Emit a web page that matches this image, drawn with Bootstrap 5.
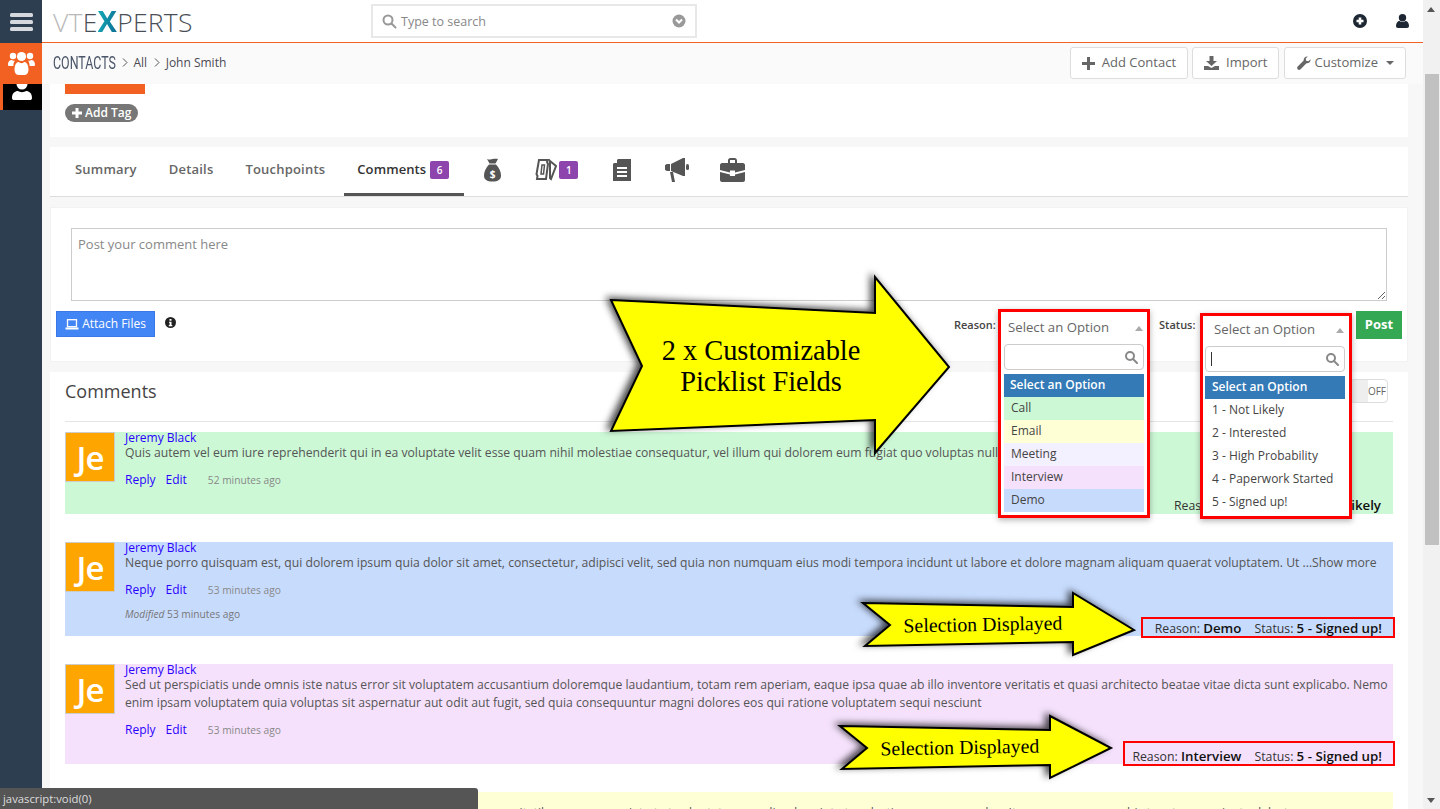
<!DOCTYPE html>
<html lang="en">
<head>
<meta charset="utf-8">
<title>Contacts</title>
<link rel="stylesheet" href="https://cdn.jsdelivr.net/npm/bootstrap@5.3.0/dist/css/bootstrap.min.css">
<style>
html,body{height:809px;overflow:hidden}
body{font-family:"Open Sans",sans-serif;font-size:12px;color:#555;background:#f7f7f7;width:1440px;position:relative}
.shell{height:809px}
.side{width:42px;background:#2c3e50;flex:none}
.side-burger{height:43px}
.side-active{height:41px;background:#f26122}
.side-user{height:26px;background:#000;border-left:3px solid #f26122}
.workspace{width:1381px;flex:none;min-width:0}
.scroller{width:17px;background:#f1f1f1;flex:none;position:relative}
.thumb{position:absolute;left:2px;width:14px;top:74px;height:471px;background:#c1c1c1}
.tri-up,.tri-down{position:absolute;left:4px;width:0;height:0;border-left:4px solid transparent;border-right:4px solid transparent}
.tri-up{top:7px;border-bottom:5px solid #555}
.tri-down{top:798px;border-top:5px solid #555}
.topbar{height:43px;background:#fff;border-bottom:1px solid #f26122;padding-left:11px}
.brand{font-family:"Open Sans",sans-serif;font-weight:300;font-size:26.500px;line-height:42px;letter-spacing:.25px;color:#4a4f57;width:318px;white-space:nowrap}
.brand-v{color:#b9b9b9}
.brand-x{font-weight:700;font-size:29px;background:linear-gradient(100deg,#14b0b8,#0c6a94);-webkit-background-clip:text;background-clip:text;color:transparent}
.searchbox{width:326px;height:34px;border:2px solid #e8e8e8;padding:0 9px;color:#888;font-size:12.500px}
.searchbox span{flex:1;margin-left:4px;padding-top:2px}
.top-icons{margin-left:auto;padding-right:14px;gap:29px}
.subbar{height:41px;background:#fafafa;padding:0 17px 0 11px}
.crumb-wrap{margin-top:-2px}
.crumb-title{font-family:"Roboto",sans-serif;font-size:18px;color:#4a5568;display:inline-block;transform:scaleX(.69);transform-origin:left center;width:62px;white-space:nowrap}
.crumb{font-size:12px;color:#4a4a55}
.crumb svg{margin:0 6px 0 6.500px}
.tool-btn{height:32px;background:#fff;border:1px solid #ddd;border-radius:3px;color:#666;font-size:13px;padding:0 11px;display:inline-flex;align-items:center;gap:7px}
.tool-btn-tight{gap:3px;padding:0 11px 0 12px;margin-left:1px}
.tool-group{gap:4px;margin-top:-1px}
.caret-mark{width:0;height:0;border-left:4px solid transparent;border-right:4px solid transparent;border-top:4px solid #666;margin-left:5px}
.stage{padding:0 15px 0 8px}
.panel{background:#fff;margin-bottom:10px}
.panel-tags{height:53px;padding-left:15px}
.tag-bar{width:80px;height:10px;background:#f26122}
.tag-pill{display:inline-flex;align-items:center;gap:3px;height:18px;margin-top:10px;padding:0 7px;background:#777;color:#fff;border-radius:9px;font-weight:600;font-size:12px}
.panel-tabs{height:50px;border-bottom:1px solid #ddd;padding-left:13px}
.tab-link{height:49px;display:flex;align-items:center;color:#666;font-size:13px;font-weight:600;padding:0 12px;margin-right:8px;letter-spacing:.2px;text-decoration:none;border-bottom:3px solid transparent}
.tab-on{color:#333;border-bottom-color:#555;margin-left:-1px;margin-right:0;padding:0 15px 0 13px;letter-spacing:.1px}
.tab-count{background:#8e44ad;color:#fff;font-size:10px;font-weight:600;padding:0;width:19px;height:18px;line-height:18px;text-align:center;border-radius:2px;margin-left:4px;display:inline-block}
.tab-ico{display:flex;align-items:center;height:45px;width:55px;justify-content:center}
.ico-bag{margin-left:1px}
.ico-ticket{width:auto;margin-left:15px;margin-right:34px}
.ico-ticket .tab-count{margin-left:2px}
.ico-doc{width:20px;margin-right:33px}
.ico-horn{width:24px;margin-right:31px}
.ico-case{width:25px}
.panel-compose{height:155px;border:1px solid #f2f2f2;padding:20px 20px 0 20px;margin-bottom:10px}
.compose-area{height:73px;border:1px solid #ccc;border-radius:0;padding:6px;font-size:13px;color:#888;resize:both}
.compose-area::placeholder{color:#888}
.compose-foot{margin:10px -15px 0 -15px}
.attach-btn{height:26px;width:99px;background:#4285f4;border:1px solid #3b78e7;color:#fff;border-radius:0;font-size:12px;padding:0;display:inline-flex;align-items:center;justify-content:center;gap:3px}
.info-ico{margin:6px 0 0 10px}
.post-btn{height:28px;width:46px;background:#34a853;color:#fff;border:0;border-radius:0;font-weight:700;font-size:13px;padding:0}
.pick-label{font-size:11px;font-weight:600;color:#444;position:absolute;top:317px}
.panel-list{padding:0 15px;height:500px;margin:0;position:relative}
.list-head{height:50px;border-bottom:1px solid #e5e5e5;font-size:18px;color:#444;padding-top:6px;margin-bottom:10px}
.toggle-off{position:absolute;right:5px;top:7px;width:38px;height:24px;border:1px solid #ddd;border-radius:4px;background:linear-gradient(90deg,#eee 0 17px,#fff 17px);font-size:10px;color:#666;line-height:22px;text-align:right;padding-right:1px}
.note{display:flex;gap:10px;position:relative;margin-bottom:28px}
.note-green{background:#ccf8d6;height:82px}
.note-blue{background:#c7dbfd;height:94px}
.note-purple{background:#f5e1fc;height:100px}
.note-yellow{background:#ffffd6;height:60px}
.avatar-box{width:50px;height:50px;background:#ffa500;color:#fff;font-size:33px;font-weight:600;line-height:50px;text-align:center;border:1px solid #ccc;flex:none;letter-spacing:-1px}
.note-body{flex:1;min-width:0;font-size:12.180px;line-height:18px;color:#555}
.note-name{color:#2a00ff;font-size:12px;line-height:12px;display:block;text-decoration:none}
.note-text{margin:0 0 9px}
.note-links{display:flex;align-items:center;font-size:12px}
.note-links a{color:#2a00ff;text-decoration:none;margin-right:10px}
.note-links small{font-size:10.200px;color:#888;margin-left:11px}
.note-mod{font-size:10.200px;color:#777;margin-top:6px}
.note-pick{position:absolute;right:12px;color:#333;font-size:12.300px;line-height:18px}
.note-pick b{font-weight:600;font-size:13.300px;color:#111}
.pick-box{position:absolute;right:-2px;border:2px solid #f00;color:#333;white-space:nowrap;text-align:right;padding-right:11px;font-size:12.300px}
.pick-box b{font-weight:600;font-size:13.300px;color:#111;margin-right:13px}
.pick-box b:last-child{margin-right:0}
.drop{position:absolute;background:#fff;border:3px solid #f00;box-shadow:0 2px 6px rgba(0,0,0,.3);padding:0 3px}
.drop-narrow{padding:0 4px 0 2px}
.drop-head{height:32px;display:flex;align-items:center;justify-content:space-between;font-size:13.200px;color:#666;padding:0 1px 0 4px}
.drop-narrow .drop-head{height:30px;padding:0 1px 2px 9px}
.drop-tri{width:0;height:0;border-left:4px solid transparent;border-right:4px solid transparent;border-bottom:5px solid #aaa}
.drop-search{height:26px;border:1px solid #ccc;border-radius:4px;margin-bottom:4px;display:flex;align-items:center;justify-content:flex-end;padding:0 5px 0 5px}
.drop-cursor{width:1px;height:14px;background:#333;margin-right:auto}
.drop-opt{height:23px;line-height:22px;padding-left:7px;font-size:12px;color:#444}
.drop-sel{background:#337ab7;color:#fff;font-weight:600;padding-left:6px}
.drop-narrow .drop-sel{padding-left:7px}
.opt-green{background:#ccf8d6}.opt-yellow{background:#ffffd6}.opt-lilac{background:#f3f0ff}.opt-pink{background:#f5e1fc}.opt-blue{background:#c7dbfd}
.callout{position:absolute;overflow:visible}
.callout text{font-family:"Liberation Serif",serif;fill:#000}
.statusbar{position:absolute;left:0;bottom:0;width:478px;height:21px;background:#555;color:#ddd;font-size:11.300px;line-height:21px;padding-left:3px;border-top-right-radius:3px}
</style>
</head>
<body>
<div class="shell d-flex">
  <aside class="side">
    <div class="side-burger d-flex align-items-center justify-content-center">
      <svg width="23" height="19" viewBox="0 0 23 19"><g fill="#d5d8dc"><rect width="23" height="4" y="1" rx="1.5"/><rect width="23" height="4" y="8" rx="1.5"/><rect width="23" height="4" y="15" rx="1.5"/></g></svg>
    </div>
    <div class="side-active d-flex align-items-center justify-content-center">
      <svg width="27" height="25" viewBox="0 0 27 25" fill="#fff"><circle cx="5" cy="5" r="3.2"/><circle cx="22" cy="5" r="3.2"/><circle cx="13.5" cy="5.5" r="4.6"/><path d="M0 14c0-4 2-5 4-5 1 1 2 1 3 .6-1 1-1.600 3-1.600 5.400H1.500C.6 15 0 14.800 0 14zM27 14c0-4-2-5-4-5-1 1-2 1-3 .6 1 1 1.600 3 1.600 5.400h3.900c.9 0 1.500-.2 1.500-1zM6.500 19c0-6 2.500-8 4-8 1.700 1.500 4.300 1.500 6 0 1.500 0 4 2 4 8 0 3-2 5-4 5h-6c-2 0-4-2-4-5z"/></svg>
    </div>
    <div class="side-user d-flex justify-content-center">
      <svg width="22" height="18" viewBox="0 0 22 18" fill="#fff"><circle cx="10" cy="0" r="5.500"/><path d="M0 14c0-5 3-7 6-7 2 1.500 6 1.500 8 0 3 0 6 2 6 7 0 1.500-1 2-2 2H2c-1 0-2-.5-2-2z"/></svg>
    </div>
  </aside>

  <div class="workspace">
    <header class="topbar d-flex align-items-center">
      <div class="brand"><span class="brand-v">VT</span>E<span class="brand-x">X</span>PERTS</div>
      <div class="searchbox d-flex align-items-center">
        <svg width="15" height="15" viewBox="0 0 15 15" fill="none" stroke="#999" stroke-width="2"><circle cx="6" cy="6" r="4.500"/><path d="M9.500 9.500l4 4" stroke-linecap="round"/></svg>
        <span>Type to search</span>
        <svg width="14" height="14" viewBox="0 0 14 14"><circle cx="7" cy="7" r="6.500" fill="#999"/><path d="M4 5.500l3 3 3-3" fill="none" stroke="#fff" stroke-width="2"/></svg>
      </div>
      <div class="top-icons d-flex align-items-center">
        <svg width="14" height="14" viewBox="0 0 14 14"><circle cx="7" cy="7" r="7" fill="#1c2733"/><path d="M7 3.500v7M3.500 7h7" stroke="#fff" stroke-width="2.600"/></svg>
        <svg width="13" height="14" viewBox="0 0 13 14" fill="#1c2733"><circle cx="6.500" cy="3.800" r="3.700"/><path d="M0 12c0-3 1.500-5 3.500-5 1.500 1.200 4.500 1.200 6 0 2 0 3.500 2 3.500 5 0 1.200-.8 2-2 2H2c-1.200 0-2-.8-2-2z"/></svg>
      </div>
    </header>

    <div class="subbar d-flex align-items-center justify-content-between">
      <div class="crumb-wrap d-flex align-items-center">
        <span class="crumb-title">CONTACTS</span>
        <span class="crumb d-flex align-items-center">
          <svg width="6" height="9" viewBox="0 0 6 9" fill="none" stroke="#555"><path d="M1 .5l4 4-4 4"/></svg>All
          <svg width="6" height="9" viewBox="0 0 6 9" fill="none" stroke="#555"><path d="M1 .5l4 4-4 4"/></svg>John Smith
        </span>
      </div>
      <div class="tool-group d-flex">
        <button class="btn tool-btn" type="button"><svg width="13" height="13" viewBox="0 0 13 13" fill="#666"><path d="M5 0h3v5h5v3H8v5H5V8H0V5h5z"/></svg>Add Contact</button>
        <button class="btn tool-btn" type="button"><svg width="15" height="14" viewBox="0 0 15 14" fill="#666"><path d="M5.500 0h4v5H13L7.500 10 2 5h3.500zM0 10h4l3.500 2L11 10h4v4H0z"/></svg>Import</button>
        <button class="btn tool-btn tool-btn-tight" type="button"><svg width="14" height="14" viewBox="0 0 14 14" fill="#666"><path d="M13.500 3.200c.4 2-1.300 4.500-4 4.100L3.600 13.300c-.8.800-2.100.8-2.900 0s-.8-2.100 0-2.900L6.700 4.500C6.300 1.800 8.800 0 10.800.5L8.700 2.600l.5 2.200 2.200.5z"/></svg>Customize<span class="caret-mark"></span></button>
      </div>
    </div>

    <main class="stage">
      <section class="panel panel-tags">
        <div class="tag-bar"></div>
        <span class="tag-pill"><svg width="10" height="10" viewBox="0 0 10 10" fill="#fff"><path d="M3.500 0h3v3.500H10v3H6.500V10h-3V6.500H0v-3h3.500z"/></svg>Add Tag</span>
      </section>

      <section class="panel panel-tabs">
        <ul class="nav">
          <li class="nav-item"><a class="tab-link" href="#">Summary</a></li>
          <li class="nav-item"><a class="tab-link" href="#">Details</a></li>
          <li class="nav-item"><a class="tab-link" href="#">Touchpoints</a></li>
          <li class="nav-item"><a class="tab-link tab-on" href="#">Comments<span class="tab-count">6</span></a></li>
          <li class="nav-item tab-ico ico-bag">
            <svg width="17" height="24" viewBox="0 0 17 24" fill="#555"><path d="M3 1c2 1 3 .5 5.500 0S13 .5 14 1l-2.500 4.500h-6zM5 6.500h7c3 3 5 7 5 11 0 4-3 6-8.500 6S0 21.500 0 17.500c0-4 2-8 5-11z"/><text x="8.500" y="20" text-anchor="middle" font-size="10" font-weight="700" fill="#fff" font-family="Open Sans">$</text></svg>
          </li>
          <li class="nav-item tab-ico ico-ticket">
            <svg width="22" height="24" viewBox="0 0 22 24" fill="none" stroke="#555" stroke-width="2"><path d="M4 2h9l-1 2 1 2-2 15H2l.5-3-1-2L4 2z"/><path d="M7 7h2.500l-1 9H6z" stroke-width="1.500"/><path d="M15 3l6 5-5 13-1-1z"/></svg>
            <span class="tab-count">1</span>
          </li>
          <li class="nav-item tab-ico ico-doc">
            <svg width="18" height="22" viewBox="0 0 18 22" fill="#555"><path d="M5 0h13v22H0V5z"/><path d="M4 9h10M4 13h10M4 17h10" stroke="#fff" stroke-width="2"/><path d="M4 0v4H0z" fill="#fff"/></svg>
          </li>
          <li class="nav-item tab-ico ico-horn">
            <svg width="24" height="24" viewBox="0 0 24 24" fill="#555"><path d="M6 6l12-6h2v18h-2L6 13z"/><rect x="21" y="6" width="3" height="6" rx="1.500"/><path d="M5 6v7H3a3.500 3.500 0 0 1 0-7zM5 14h3l2 10H7z"/></svg>
          </li>
          <li class="nav-item tab-ico ico-case">
            <svg width="25" height="24" viewBox="0 0 25 24" fill="#555"><path d="M8 5V2.500C8 1 9 0 10.500 0h4C16 0 17 1 17 2.500V5h-2V2h-5v3z"/><path d="M2 5h21c1 0 2 1 2 2v5l-10 2.500v-2h-5v2L0 12V7c0-1 1-2 2-2zM0 14l10 2.500V18h5v-1.500L25 14v8c0 1-1 2-2 2H2c-1 0-2-1-2-2z"/></svg>
          </li>
        </ul>
      </section>

      <section class="panel panel-compose">
        <textarea class="form-control compose-area" placeholder="Post your comment here"></textarea>
        <div class="compose-foot d-flex justify-content-between">
          <div class="d-flex align-items-start">
            <button class="btn attach-btn" type="button"><svg width="14" height="11" viewBox="0 0 14 11" fill="none" stroke="#fff" stroke-width="1.300"><rect x="2.500" y=".7" width="9" height="7"/><path d="M.5 9.500h13" stroke-width="2"/></svg>Attach Files</button>
            <svg class="info-ico" width="11" height="11" viewBox="0 0 11 11"><circle cx="5.500" cy="5.500" r="5.500" fill="#222"/><path d="M4.500 2h2v1.700h-2zM4 4.700h2.500v3.300h.8v1.200H3.800V8h.8V5.800H4z" fill="#fff"/></svg>
          </div>
          <button class="btn post-btn" type="button">Post</button>
        </div>
      </section>

      <section class="panel panel-list">
        <div class="list-head position-relative">Comments<div class="toggle-off">OFF</div></div>

        <article class="note note-green">
          <div class="avatar-box">Je</div>
          <div class="note-body">
            <a class="note-name" href="#">Jeremy Black</a>
            <div class="note-text">Quis autem vel eum iure reprehenderit qui in ea voluptate velit esse quam nihil molestiae consequatur, vel illum qui dolorem eum fugiat quo voluptas nulla pariatur</div>
            <div class="note-links"><a href="#">Reply</a><a href="#">Edit</a><small>52 minutes ago</small></div>
          </div>
          <div class="note-pick" style="bottom:-1px">Reason: <b>Call</b> &nbsp; Status: <b>1 - Not Likely</b></div>
        </article>

        <article class="note note-blue">
          <div class="avatar-box">Je</div>
          <div class="note-body">
            <a class="note-name" href="#">Jeremy Black</a>
            <div class="note-text">Neque porro quisquam est, qui dolorem ipsum quia dolor sit amet, consectetur, adipisci velit, sed quia non numquam eius modi tempora incidunt ut labore et dolore magnam aliquam quaerat voluptatem. Ut ...Show more</div>
            <div class="note-links"><a href="#">Reply</a><a href="#">Edit</a><small>53 minutes ago</small></div>
            <div class="note-mod"><i>Modified</i> 53 minutes ago</div>
          </div>
          <div class="pick-box" style="top:75px;width:254px;height:21px;line-height:19px">Reason: <b>Demo</b>Status: <b>5 - Signed up!</b></div>
        </article>

        <article class="note note-purple">
          <div class="avatar-box">Je</div>
          <div class="note-body">
            <a class="note-name" href="#">Jeremy Black</a>
            <div class="note-text">Sed ut perspiciatis unde omnis iste natus error sit voluptatem accusantium doloremque laudantium, totam rem aperiam, eaque ipsa quae ab illo inventore veritatis et quasi architecto beatae vitae dicta sunt explicabo. Nemo enim ipsam voluptatem quia voluptas sit aspernatur aut odit aut fugit, sed quia consequuntur magni dolores eos qui ratione voluptatem sequi nesciunt</div>
            <div class="note-links"><a href="#">Reply</a><a href="#">Edit</a><small>53 minutes ago</small></div>
          </div>
          <div class="pick-box" style="top:77px;width:272px;height:25px;line-height:26px">Reason: <b>Interview</b>Status: <b>5 - Signed up!</b></div>
        </article>

        <article class="note note-yellow">
          <div class="avatar-box">Je</div>
          <div class="note-body">
            <a class="note-name" href="#">Jeremy Black</a>
            <div class="note-text">Temporibus autem quibusdam et aut officiis debitis aut rerum necessitatibus saepe eveniet ut et voluptates repudiandae sint et molestiae non recusandae. Itaque earum rerum hic tenetur a sapiente delectus</div>
          </div>
        </article>
      </section>
    </main>
  </div>

  <div class="scroller"><span class="tri-up"></span><span class="thumb"></span><span class="tri-down"></span></div>
</div>

<span class="pick-label" style="left:954px">Reason:</span>
<span class="pick-label" style="left:1159px">Status:</span>

<div class="drop" style="left:998px;top:309px;width:152px;height:209px">
  <div class="drop-head"><span>Select an Option</span><span class="drop-tri"></span></div>
  <div class="drop-search"><svg width="13" height="13" viewBox="0 0 13 13" fill="none" stroke="#888" stroke-width="2"><circle cx="5" cy="5" r="4"/><path d="M8 8l4 4" stroke-linecap="round"/></svg></div>
  <div class="drop-opt drop-sel">Select an Option</div>
  <div class="drop-opt opt-green">Call</div>
  <div class="drop-opt opt-yellow">Email</div>
  <div class="drop-opt opt-lilac">Meeting</div>
  <div class="drop-opt opt-pink">Interview</div>
  <div class="drop-opt opt-blue">Demo</div>
</div>

<div class="drop drop-narrow" style="left:1200px;top:313px;width:152px;height:206px">
  <div class="drop-head"><span>Select an Option</span><span class="drop-tri"></span></div>
  <div class="drop-search"><span class="drop-cursor"></span><svg width="13" height="13" viewBox="0 0 13 13" fill="none" stroke="#888" stroke-width="2"><circle cx="5" cy="5" r="4"/><path d="M8 8l4 4" stroke-linecap="round"/></svg></div>
  <div class="drop-opt drop-sel">Select an Option</div>
  <div class="drop-opt">1 - Not Likely</div>
  <div class="drop-opt">2 - Interested</div>
  <div class="drop-opt">3 - High Probability</div>
  <div class="drop-opt">4 - Paperwork Started</div>
  <div class="drop-opt">5 - Signed up!</div>
</div>

<svg class="callout" style="left:0;top:0" width="1440" height="809" viewBox="0 0 1440 809" pointer-events="none">
  <defs><filter id="arrowShadow" x="-10%" y="-20%" width="120%" height="140%"><feDropShadow dx="-4" dy="-2" stdDeviation="3.500" flood-color="#000" flood-opacity=".7"/></filter></defs>
  <polygon points="611,300 875,313 875,277 949,367 875,453 875,420 611,431 642,366" fill="#ff0" stroke="#000" stroke-width="2" filter="url(#arrowShadow)"/>
  <text x="761" y="360" text-anchor="middle" font-size="28.400">2 x Customizable</text>
  <text x="761" y="391" text-anchor="middle" font-size="28.400">Picklist Fields</text>
  <polygon points="863,603 1073,607 1073,593 1134,630 1073,655 1073,642 865,646 890,625" fill="#ff0" stroke="#000" stroke-width="2" filter="url(#arrowShadow)"/>
  <text x="983" y="631" text-anchor="middle" font-size="19.800" transform="rotate(-1 983 631)">Selection Displayed</text>
  <polygon points="840,726 1050,730 1050,716 1111,748 1050,778 1050,765 842,769 867,748" fill="#ff0" stroke="#000" stroke-width="2" filter="url(#arrowShadow)"/>
  <text x="960" y="754" text-anchor="middle" font-size="19.800" transform="rotate(-1 960 754)">Selection Displayed</text>
</svg>

<div class="statusbar">javascript:void(0)</div>

<script src="https://cdn.jsdelivr.net/npm/bootstrap@5.3.0/dist/js/bootstrap.bundle.min.js"></script>
</body>
</html>
